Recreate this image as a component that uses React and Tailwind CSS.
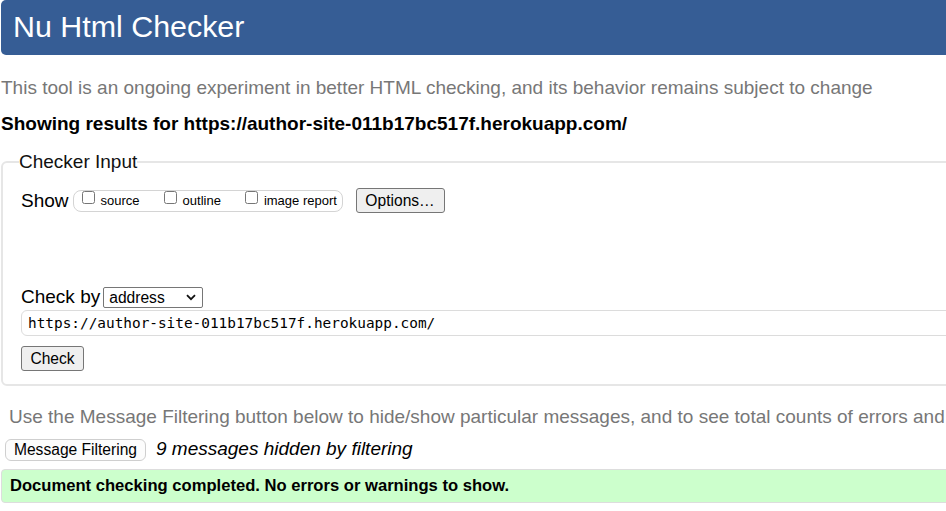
import React from 'react';

const sans = { fontFamily: '"Liberation Sans", Arial, sans-serif' };

const Check = ({ label, first }) => (
  <label className={`flex items-center ${first ? 'ml-[8px]' : 'ml-[24px]'}`}>
    <input type="checkbox" className="w-[13px] h-[13px] mb-[6px]" />
    <span className="ml-[6px] text-[13px] leading-[16px] text-black">{label}</span>
  </label>
);

const GrayButton = ({ children, className = '' }) => (
  <button className={`h-[25px] border border-[#767676] rounded-[3px] bg-[#efefef] text-[15.6px] leading-[20px] text-black ${className}`}>
    {children}
  </button>
);

export default function App() {
  return (
    <div className="w-[946px] h-[511px] overflow-hidden bg-white" style={sans}>
      <div className="w-[1150px]">
        {/* en-tête */}
        <div className="ml-px h-[55px] rounded-[5px] bg-[#365d95] pl-[12px] pt-[9px]">
          <h1 className="text-[30.4px] leading-[34px] text-white">Nu Html Checker</h1>
        </div>

        <p className="mt-[22px] ml-px text-[19px] leading-[22px] text-[#777] whitespace-nowrap">
          This tool is an ongoing experiment in better HTML checking, and its behavior remains subject to change
        </p>
        <p className="mt-[14px] ml-px text-[19px] leading-[22px] font-bold text-black whitespace-nowrap">
          Showing results for https://author-site-011b17bc517f.herokuapp.com/
        </p>

        {/* formulaire */}
        <fieldset className="mt-[16px] ml-px border-2 border-[#e6e6e6] rounded-[6px] pl-[18px] pt-[15px] pb-[13px]">
          <legend className="-ml-[2px] text-[19px] leading-[22px] text-[#111]">Checker Input</legend>

          <div className="flex items-center h-[25px]">
            <span className="text-[19px] leading-[22px] text-black">Show</span>
            <div className="ml-[4px] flex items-center h-[22px] w-[270px] border border-[#d4d4d4] rounded-[8px]">
              <Check label="source" first />
              <Check label="outline" />
              <Check label="image report" />
            </div>
            <GrayButton className="ml-[13px] w-[89px]">Options…</GrayButton>
          </div>

          <div className="mt-[73px] flex items-center h-[22px]">
            <span className="text-[19px] leading-[22px] text-black">Check by</span>
            <div className="ml-[3px] flex items-center justify-between w-[100px] h-[21px] border border-[#767676] rounded-[2px] pl-[5px] pr-[6px]">
              <span className="text-[15.6px] leading-[19px] text-black">address</span>
              <svg width="10" height="7" viewBox="0 0 10 7" fill="none">
                <path d="M1 1.2 L5 5.2 L9 1.2" stroke="#111" strokeWidth="1.8" />
              </svg>
            </div>
          </div>

          <div className="mt-[2px] h-[26px] border border-[#dcdcdc] rounded-[6px] flex items-center pl-[6px]">
            <span
              className="text-[14.4px] leading-[18px] text-black"
              style={{ fontFamily: '"DejaVu Sans Mono", "Liberation Mono", monospace' }}
            >
              https://author-site-011b17bc517f.herokuapp.com/
            </span>
          </div>

          <GrayButton className="mt-[10px] w-[63px] block">Check</GrayButton>
        </fieldset>

        <p className="mt-[20px] ml-[9px] text-[19px] leading-[22px] text-[#777] whitespace-nowrap">
          Use the Message Filtering button below to hide/show particular messages, and to see total counts of errors and warnings.
        </p>

        <div className="mt-[11px] flex items-center h-[22px]">
          <button className="ml-[5px] h-[22px] w-[141px] border border-[#cfcfcf] rounded-[6px] bg-[#fcfcfc] text-[15.6px] leading-[20px] text-black">
            Message Filtering
          </button>
          <span className="ml-[10px] -mt-[3px] text-[19px] leading-[22px] italic text-black">9 messages hidden by filtering</span>
        </div>

        <div className="mt-[8px] ml-px h-[34px] rounded-[4px] border border-[#dddddd] bg-[#ccffcc] flex items-center pl-[8px]">
          <p className="text-[16.6px] leading-[20px] font-bold text-black">
            Document checking completed. No errors or warnings to show.
          </p>
        </div>
      </div>
    </div>
  );
}
